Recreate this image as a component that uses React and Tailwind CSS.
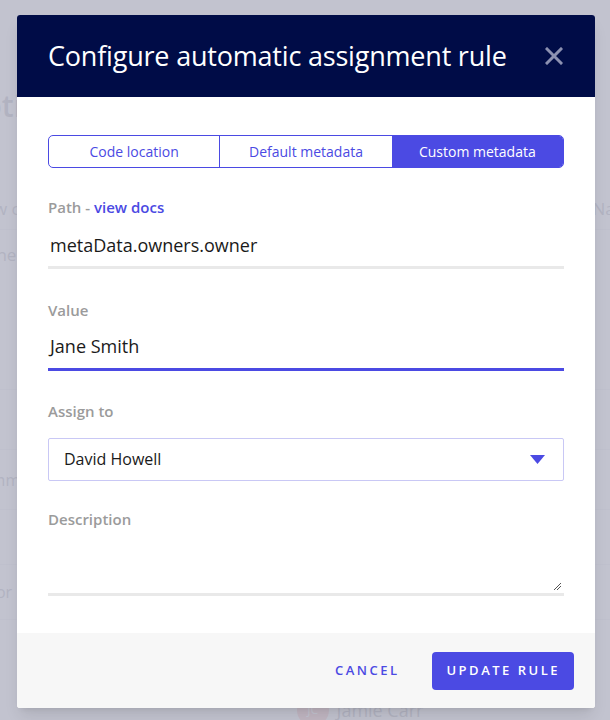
import React from 'react';

const font = { fontFamily: '"Open Sans", "Noto Sans", sans-serif' };

function BgPage() {
    // faint page content sitting under the overlay
    return (
        <div className="h-[720px] bg-[#f4f4f8] text-[#8a8b98] flex flex-col">
            <div className="h-[80px]" />
            <div className="h-[50px] flex items-center text-[30px] font-semibold -ml-[40px]">Notif</div>
            <div className="h-[100px] border-b border-[#e4e4ea] flex items-end justify-between text-[17px] -ml-[30px] -mr-[30px] pb-2">
                <span>View c</span><span>Name</span>
            </div>
            <div className="h-[50px] flex items-center text-[17px] -ml-[30px]">Owner u</div>
            <div className="h-[110px] border-b border-[#e4e4ea]" />
            <div className="h-[60px] border-b border-[#e4e4ea]" />
            <div className="h-[60px] flex items-center text-[16px] -ml-[28px] border-b border-[#e4e4ea]">Summ</div>
            <div className="h-[55px] border-b border-[#e4e4ea]" />
            <div className="h-[55px] flex items-center text-[16px] -ml-[26px] border-b border-[#e4e4ea]">Error</div>
            <div className="flex-1 flex items-end justify-center pl-[110px] gap-2">
                <div className="w-[32px] h-[32px] rounded-full bg-[#f0a0a0] flex items-center justify-center text-white text-[12px] mb-[-6px]">JC</div>
                <span className="text-[18px] mb-[-4px]">Jamie Carr</span>
            </div>
        </div>
    );
}

export default function App() {
    return (
        <div className="relative w-[610px] h-[720px] overflow-hidden" style={font}>
            <BgPage />

            {/* overlay */}
            <div className="absolute inset-0 bg-[#b9bac8]/85 pt-[15px] pl-[17px]">
                <div className="w-[578px] bg-white rounded-[3px] overflow-hidden shadow-lg flex flex-col">
                    {/* header */}
                    <div className="h-[82px] bg-[#000c47] flex items-center justify-between pl-[31px] pr-[32px]">
                        <h1 className="text-white text-[27px] tracking-[-0.2px]">Configure automatic assignment rule</h1>
                        <svg width="18" height="18" viewBox="0 0 18 18">
                            <path d="M2 2 L16 16 M16 2 L2 16" stroke="#8c91b1" strokeWidth="3" strokeLinecap="square" />
                        </svg>
                    </div>

                    {/* body */}
                    <div className="px-[31px] pt-[38px] pb-[37px] flex flex-col">
                        <div className="grid grid-cols-3 h-[33px] border border-[#4b4ae3] rounded-[5px] overflow-hidden text-[14px]">
                            <div className="flex items-center justify-center text-[#4b4ae3] border-r border-[#4b4ae3]">Code location</div>
                            <div className="flex items-center justify-center text-[#4b4ae3]">Default metadata</div>
                            <div className="flex items-center justify-center bg-[#4b4ae3] text-white">Custom metadata</div>
                        </div>

                        <div className="mt-[28px] text-[15px] text-[#9b9b9b] font-semibold">
                            Path - <span className="text-[#4b4ae3]">view docs</span>
                        </div>
                        <div className="mt-[13px] pb-[7px] pl-[2px] text-[18px] text-[#1a1a1a] border-b-[3px] border-[#e9e9e9]">metaData.owners.owner</div>

                        <div className="mt-[30px] text-[15px] text-[#9b9b9b] font-semibold">Value</div>
                        <div className="mt-[12px] pb-[8px] pl-[2px] text-[18px] text-[#1a1a1a] border-b-[3px] border-[#4b4ae3]">Jane Smith</div>

                        <div className="mt-[29px] text-[15px] text-[#9b9b9b] font-semibold">Assign to</div>
                        <div className="mt-[15px] h-[43px] border border-[#c9c8f5] rounded-[2px] flex items-center justify-between pl-[15px] pr-[18px] text-[16px] text-[#1a1a1a]">
                            <span>David Howell</span>
                            <svg width="15" height="9" viewBox="0 0 15 9">
                                <path d="M0 0 H15 L7.5 9 Z" fill="#4b4ae3" />
                            </svg>
                        </div>

                        <div className="mt-[27px] text-[15px] text-[#9b9b9b] font-semibold">Description</div>
                        <div className="relative h-[66px] border-b-[3px] border-[#e9e9e9]">
                            <svg className="absolute right-[2px] bottom-[2px]" width="9" height="9" viewBox="0 0 9 9">
                                <path d="M8 1 L1 8 M8 4 L4 8" stroke="#555" strokeWidth="1" />
                            </svg>
                        </div>
                    </div>

                    {/* footer */}
                    <div className="h-[75px] bg-[#f7f7f7] flex items-center justify-end pr-[21px] gap-[33px]">
                        <button className="text-[13px] tracking-[2.5px] text-[#4b4ae3] font-semibold">CANCEL</button>
                        <button className="h-[38px] px-[14px] bg-[#4b4ae3] rounded-[4px] text-white text-[13px] tracking-[2.5px] font-semibold">UPDATE RULE</button>
                    </div>
                </div>
            </div>
        </div>
    );
}
